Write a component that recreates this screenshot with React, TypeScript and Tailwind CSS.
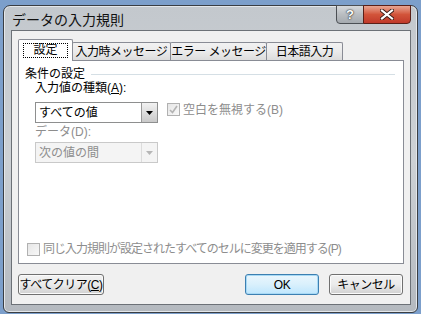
import React from 'react'

const jp = "font-['Liberation_Sans','Noto_Sans_CJK_JP',sans-serif]"

function Tab({ label, width, active }: { label: string; width: number; active?: boolean }) {
  if (active) {
    return (
      <div
        className="relative z-10 -mb-px h-[22px] border border-b-0 border-[#898c95] bg-white flex items-center justify-center rounded-t-[2px]"
        style={{ width }}
      >
        <span className="border border-dotted border-black px-[9px] leading-[13px] h-[15px] flex items-center">{label}</span>
      </div>
    )
  }
  return (
    <div
      className="h-[18px] -ml-px border border-b-0 border-[#898c95] bg-gradient-to-b from-[#f2f2f2] via-[#ebebeb] to-[#dcdcdc] flex items-center justify-center rounded-t-[2px]"
      style={{ width }}
    >
      <span className="leading-[14px] tracking-[-0.5px]">{label}</span>
    </div>
  )
}

function Combo({ value, disabled }: { value: string; disabled?: boolean }) {
  return (
    <div
      className={`w-[123px] h-[21px] border flex items-center ${
        disabled ? 'border-[#c9c9c9] bg-[#f4f4f4] text-[#8d8d8d]' : 'border-[#8e8f8f] bg-white text-black'
      }`}
    >
      <span className="flex-1 pl-[3px] leading-[14px]">{value}</span>
      <div
        className={`w-[16px] h-[19px] flex items-center justify-center border-l ${
          disabled
            ? 'border-[#dcdcdc] bg-[#f4f4f4]'
            : 'border-[#9a9a9a] bg-gradient-to-b from-[#f2f2f2] to-[#c9c9c9]'
        }`}
      >
        <svg width="7" height="4" viewBox="0 0 7 4">
          <path d="M0 0h7L3.5 4z" fill={disabled ? '#b6b6b6' : '#000'} />
        </svg>
      </div>
    </div>
  )
}

function Check({ checked }: { checked?: boolean }) {
  return (
    <div className="w-[13px] h-[13px] border border-[#b1b1b1] bg-gradient-to-br from-[#e6e6e6] to-[#f8f8f8] flex items-center justify-center">
      {checked && (
        <svg width="9" height="9" viewBox="0 0 9 9">
          <path d="M1 5l2.5 2.5L8 1" stroke="#b3b3b3" strokeWidth="1.6" fill="none" />
        </svg>
      )}
    </div>
  )
}

function Btn({ label, width, primary }: { label: React.ReactNode; width: number; primary?: boolean }) {
  return (
    <div
      className={`h-[21px] rounded-[3px] border flex items-center justify-center ${
        primary
          ? 'border-[#3c7fb1] bg-gradient-to-b from-[#eaf6fd] via-[#d9f0fc] to-[#bee6fd] shadow-[inset_0_0_0_1px_#a7d9f5]'
          : 'border-[#707070] bg-gradient-to-b from-[#f2f2f2] via-[#ebebeb] to-[#d0d0d0] shadow-[inset_0_0_0_1px_#fbfbfb]'
      }`}
      style={{ width }}
    >
      <span className="leading-[14px] tracking-[-0.5px]">{label}</span>
    </div>
  )
}

export default function App() {
  return (
    <div className={`w-[421px] h-[314px] overflow-hidden bg-[#7c9fcb] pl-[3px] pt-[5px] ${jp} text-[12px] text-black`}>
      {/* window frame */}
      <div className="w-[415px] h-[308px] rounded-t-[7px] rounded-b-[6px] border border-[#3a3e43] bg-gradient-to-b from-[#c3c8cd] via-[#cdd1d5] to-[#b4b9bf] shadow-[inset_0_0_0_1px_#e4e7ea] flex flex-col px-[7px] pr-[6px] pb-[7px]">
        {/* title bar */}
        <div className="h-[26px] flex items-start justify-between">
          <span className="mt-[6px] ml-[1px] text-[14px] leading-[16px] text-[#111]">データの入力規則</span>
          <div className="flex -mt-px">
            <div className="w-[28px] h-[19px] rounded-bl-[4px] border border-[#4b4f54] bg-gradient-to-b from-[#d6d9dc] via-[#b9bdc1] to-[#a5aaaf] flex items-center justify-center">
              <span className="font-bold text-[13px] leading-[13px] text-white [text-shadow:0_0_2px_#222,0_0_1px_#222]">?</span>
            </div>
            <div className="w-[48px] h-[19px] -ml-px rounded-br-[4px] border border-[#5a2018] bg-gradient-to-b from-[#e8a592] via-[#d2543a] to-[#c0392a] flex items-center justify-center">
              <svg width="14" height="11" viewBox="0 0 14 11">
                <path d="M2 1.5l10 8M12 1.5l-10 8" stroke="#3a1a14" strokeWidth="4" strokeLinecap="square" />
                <path d="M2 1.5l10 8M12 1.5l-10 8" stroke="#fff" strokeWidth="2.2" strokeLinecap="square" />
              </svg>
            </div>
          </div>
        </div>

        {/* client area */}
        <div className="flex-1 border border-[#6c7177] bg-[#f0f0f0] flex flex-col pl-[6px] pr-[7px] pt-[8px] pb-[9px]">
          <div className="flex items-end h-[21px]">
            <Tab label="設定" width={55} active />
            <Tab label="入力時メッセージ" width={99} />
            <Tab label="エラー メッセージ" width={97} />
            <Tab label="日本語入力" width={77} />
          </div>
          <div className="h-[204px] w-[386px] border border-[#898c95] bg-white flex flex-col pl-[6px] pr-[8px] pt-[6px] pb-[7px]">
            <div className="flex items-center h-[14px]">
              <span className="leading-[14px]">条件の設定</span>
              <div className="flex-1 ml-[6px] h-px bg-[#d5dfe5]" />
            </div>
            <div className="ml-[10px] flex flex-col">
              <span className="mt-[0px] leading-[14px]">入力値の種類(<span className="underline">A</span>):</span>
              <div className="mt-[7px] flex items-center">
                <Combo value="すべての値" />
                <div className="ml-[9px] flex items-center -mt-[6px]">
                  <Check checked />
                  <span className="ml-[3px] leading-[14px] text-[#8d8d8d]">空白を無視する(B)</span>
                </div>
              </div>
              <span className="mt-[2px] leading-[14px] text-[#8d8d8d]">データ(D):</span>
              <div className="mt-[3px]">
                <Combo value="次の値の間" disabled />
              </div>
            </div>
            <div className="flex-1" />
            <div className="flex items-center ml-[2px]">
              <Check />
              <span className="ml-[3px] leading-[14px] text-[#8d8d8d] tracking-[-1px]">同じ入力規則が設定されたすべてのセルに変更を適用する(P)</span>
            </div>
          </div>
          <div className="mt-[10px] flex items-center">
            <Btn label={<>すべてクリア(<span className="underline">C</span>)</>} width={86} />
            <div className="flex-1" />
            <Btn label="OK" width={74} primary />
            <div className="w-[10px]" />
            <Btn label="キャンセル" width={74} />
          </div>
        </div>
      </div>
    </div>
  )
}
